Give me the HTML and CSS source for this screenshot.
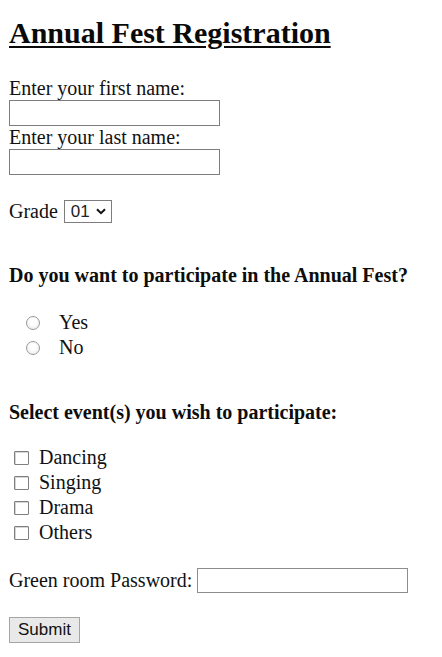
FILE: index.html
```html
<!DOCTYPE html>
<html lang="en">
<head>
<meta charset="utf-8">
<title>Annual Fest Registration</title>
<link rel="stylesheet" href="styles.css">
</head>
<body>
<form class="page">
  <h2 class="title">Annual Fest Registration</h2>

  <div class="names">
    <label class="line" for="fname">Enter your first name:</label>
    <input class="text" id="fname" type="text">
    <label class="line" for="lname">Enter your last name:</label>
    <input class="text" id="lname" type="text">
  </div>

  <div class="grade">
    <label for="grade">Grade</label>
    <span class="select-wrap">
      <select class="select" id="grade"><option>01</option><option>02</option><option>03</option></select>
      <svg class="chev" width="10" height="7" viewBox="0 0 10 7" aria-hidden="true"><path d="M1 1.2 L5 5.2 L9 1.2" fill="none" stroke="#111" stroke-width="2"/></svg>
    </span>
  </div>

  <h4 class="question q1">Do you want to participate in the Annual Fest?</h4>
  <div class="radios">
    <label class="opt"><input class="radio" type="radio" name="part"><span class="radio-text">Yes</span></label>
    <label class="opt"><input class="radio" type="radio" name="part"><span class="radio-text">No</span></label>
  </div>

  <h4 class="question q2">Select event(s) you wish to participate:</h4>
  <div class="checks">
    <label class="opt"><input class="check" type="checkbox"><span class="check-text">Dancing</span></label>
    <label class="opt"><input class="check" type="checkbox"><span class="check-text">Singing</span></label>
    <label class="opt"><input class="check" type="checkbox"><span class="check-text">Drama</span></label>
    <label class="opt"><input class="check" type="checkbox"><span class="check-text">Others</span></label>
  </div>

  <div class="pass">
    <label for="pw">Green room Password:</label>
    <input class="text pw" id="pw" type="password">
  </div>

  <div class="actions">
    <button class="submit" type="submit">Submit</button>
  </div>
</form>
</body>
</html>
```

FILE: styles.css
```css
html, body {
  margin: 0;
  padding: 0;
  background: #ffffff;
}

body {
  font-family: "Liberation Serif", "Times New Roman", serif;
  font-size: 20px;
  color: #111111;
}

.page {
  padding: 16px 9px 0 9px;
  display: flex;
  flex-direction: column;
  align-items: flex-start;
}

.title {
  margin: 0;
  font-size: 30px;
  line-height: 34px;
  font-weight: bold;
  text-decoration: underline;
  text-decoration-thickness: 2px;
  text-underline-offset: 3px;
  color: #0a0a0a;
}

.names {
  margin-top: 27px;
  display: flex;
  flex-direction: column;
  align-items: flex-start;
}

.line {
  display: block;
  line-height: 23px;
}

.text {
  box-sizing: border-box;
  width: 211px;
  height: 26px;
  margin: 0;
  padding: 1px 3px;
  border: 1px solid #7d7d7d;
  background: #ffffff;
  font-family: "Liberation Sans", Arial, sans-serif;
  font-size: 16px;
}

.grade {
  margin-top: 23px;
  height: 26px;
  display: flex;
  align-items: center;
  gap: 6px;
  line-height: 23px;
}

.select-wrap {
  position: relative;
  display: inline-flex;
}

.select {
  -webkit-appearance: none;
  appearance: none;
  box-sizing: border-box;
  width: 48px;
  height: 23px;
  margin: 0;
  padding: 0 0 0 6px;
  border: 1px solid #7d7d7d;
  border-radius: 0;
  background: #ffffff;
  font-family: "Liberation Sans", Arial, sans-serif;
  font-size: 17px;
  color: #222222;
}

.chev {
  position: absolute;
  right: 6px;
  top: 8px;
  pointer-events: none;
}

.question {
  margin: 0;
  font-size: 20px;
  line-height: 23px;
  font-weight: bold;
  color: #0d0d0d;
}

.q1 { margin-top: 40px; }
.q2 { margin-top: 41px; }

.radios {
  margin-top: 23px;
  display: flex;
  flex-direction: column;
}

.checks {
  margin-top: 21px;
  display: flex;
  flex-direction: column;
}

.opt {
  height: 25px;
  display: flex;
  align-items: center;
  line-height: 23px;
}

.radio {
  -webkit-appearance: none;
  appearance: none;
  box-sizing: border-box;
  width: 14px;
  height: 14px;
  margin: 0 0 0 17px;
  border: 1px solid #9a9a9a;
  border-radius: 50%;
  background: radial-gradient(circle at 50% 40%, #ffffff 30%, #e6e6e6 100%);
}

.radio-text {
  margin-left: 19px;
}

.check {
  -webkit-appearance: none;
  appearance: none;
  box-sizing: border-box;
  width: 15px;
  height: 14px;
  margin: 0 0 0 5px;
  border: 1px solid #7f7f7f;
  border-radius: 1px;
  background: #ffffff;
  box-shadow: inset 1px 1px 0 #d6d6d6;
}

.check-text {
  margin-left: 10px;
}

.pass {
  margin-top: 23px;
  height: 25px;
  display: flex;
  align-items: center;
  gap: 5px;
  line-height: 23px;
}

.pw {
  height: 25px;
  border-color: #8d8d8d;
}

.actions {
  margin-top: 24px;
}

.submit {
  box-sizing: border-box;
  width: 71px;
  height: 26px;
  margin: 0;
  padding: 0 8px;
  border: 1px solid #a5a5a5;
  border-radius: 0;
  background: #e9e9e9;
  font-family: "Liberation Sans", Arial, sans-serif;
  font-size: 17px;
  color: #111111;
}
```
